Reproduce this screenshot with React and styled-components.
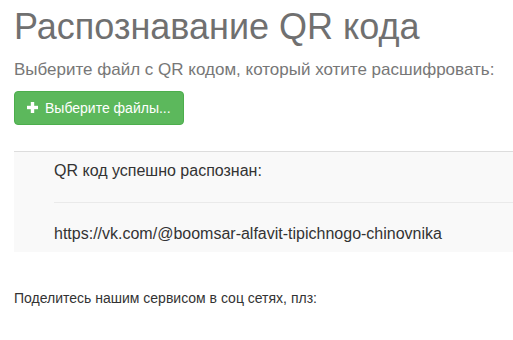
import React from 'react';
import styled, { createGlobalStyle } from 'styled-components';

const GlobalStyle = createGlobalStyle`
  body {
    margin: 0;
    background: #fff;
    font-family: "Liberation Sans", Arial, sans-serif;
    color: #333;
    overflow: hidden;
  }
`;

const Page = styled.div`
  padding: 0 0 0 14px;
`;

const Title = styled.h1`
  margin: 7px 0 0;
  font-size: 36px;
  font-weight: 500;
  line-height: 1.1;
  color: #707070;
`;

const Lead = styled.p`
  margin: 10px 0 8px;
  font-size: 17px;
  line-height: 26px;
  white-space: nowrap;
  color: #777;
`;

const UploadButton = styled.button`
  display: inline-flex;
  align-items: center;
  gap: 7px;
  height: 34px;
  padding: 6px 12px;
  border: 1px solid #4cae4c;
  border-radius: 4px;
  background: #5cb85c;
  color: #fff;
  font-family: inherit;
  font-size: 14px;
  line-height: 20px;
  cursor: pointer;
`;

const Result = styled.div`
  margin-top: 26px;
  padding: 8px 0 7px 40px;
  background: #f9f9f9;
  border-top: 1px solid #ddd;
`;

const ResultLine = styled.p`
  margin: 0;
  font-size: 16px;
  line-height: 22px;
  color: #333;
`;

const Divider = styled.hr`
  margin: 20px 0;
  border: 0;
  border-top: 1px solid #eaeaea;
`;

const Share = styled.p`
  margin: 36px 0 0;
  font-size: 14px;
  line-height: 20px;
  color: #333;
`;

const PlusIcon = () => (
  <svg width="11" height="11" viewBox="0 0 11 11">
    <rect x="3.8" y="0" width="3.4" height="11" fill="#fff" />
    <rect x="0" y="3.8" width="11" height="3.4" fill="#fff" />
  </svg>
);

export default function App() {
  return (
    <Page>
      <GlobalStyle />
      <Title>Распознавание QR кода</Title>
      <Lead>Выберите файл с QR кодом, который хотите расшифровать:</Lead>
      <UploadButton>
        <PlusIcon />
        Выберите файлы...
      </UploadButton>
      <Result>
        <ResultLine>QR код успешно распознан:</ResultLine>
        <Divider />
        <ResultLine>https://vk.com/@boomsar-alfavit-tipichnogo-chinovnika</ResultLine>
      </Result>
      <Share>Поделитесь нашим сервисом в соц сетях, плз:</Share>
    </Page>
  );
}
